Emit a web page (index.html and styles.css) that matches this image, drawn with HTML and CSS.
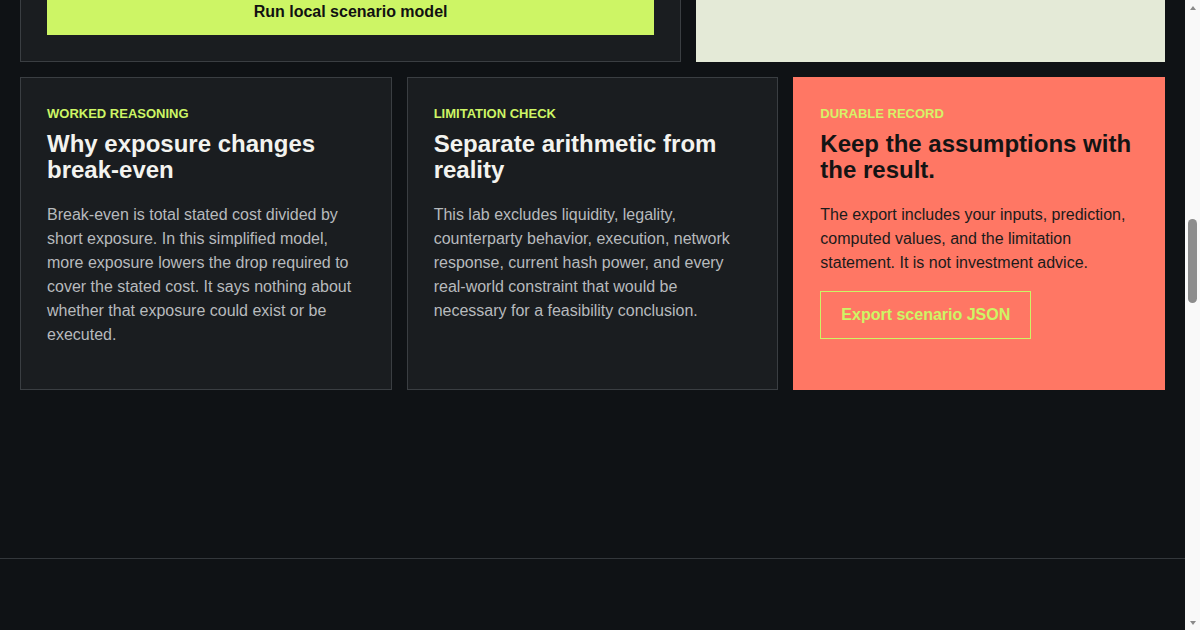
FILE: index.html
```html
<!DOCTYPE html>
<html lang="en">
<head>
    <meta charset="UTF-8">
    <meta name="viewport" content="width=device-width, initial-scale=1.0">
    <title>Short Exposure Scenario Lab</title>
    <link rel="stylesheet" href="styles.css">
</head>
<body>
    <header class="site-header">
        <div class="brand"><span class="brand-mark"></span>Scenario Lab</div>
        <nav class="site-nav">
            <a href="#model">Model</a>
            <a href="#notes">Notes</a>
            <a href="#record">Record</a>
        </nav>
    </header>

    <main class="page">
        <section class="hero">
            <p class="eyebrow">Educational arithmetic only</p>
            <h1>What would a price drop have to be to cover the stated cost?</h1>
            <p class="lede">Enter a short exposure and a total stated cost. The lab divides one by the other and shows the drop that would be needed to break even. Nothing is sent anywhere: every calculation runs in this page.</p>
        </section>

        <section class="steps">
            <div class="step">
                <span class="step-num">01</span>
                <h3>State the cost</h3>
                <p>Write down every cost you are assuming, in one currency.</p>
            </div>
            <div class="step">
                <span class="step-num">02</span>
                <h3>Choose exposure</h3>
                <p>Set a hypothetical short position size in BTC.</p>
            </div>
            <div class="step">
                <span class="step-num">03</span>
                <h3>Read the limits</h3>
                <p>Compare the arithmetic with what the model leaves out.</p>
            </div>
        </section>

        <div class="section-head">
            <p class="eyebrow">Local model</p>
            <h2>Run the scenario</h2>
            <p>Inputs on the left, computed values on the right. Results refresh only when you run the model.</p>
        </div>

        <section class="lab" id="model">
            <form class="card model-form" id="model-form">
                <p class="eyebrow">Scenario inputs</p>
                <h2>Describe the scenario</h2>
                <p class="form-intro">All values stay on this device. Change any field and run the model again to update the result.</p>

                <div class="field-grid">
                    <label class="field">
                        <span>Reference price (USD)</span>
                        <input type="number" value="64000">
                    </label>
                    <label class="field">
                        <span>Short exposure (BTC)</span>
                        <input type="number" value="250">
                    </label>
                    <label class="field">
                        <span>Total stated cost (USD)</span>
                        <input type="number" value="2000000">
                    </label>
                    <label class="field">
                        <span>Your prediction</span>
                        <select>
                            <option>Price falls more than break-even</option>
                            <option>Price falls less than break-even</option>
                        </select>
                    </label>
                    <label class="field">
                        <span>Scenario label</span>
                        <input type="text" value="Classroom example A">
                    </label>
                    <label class="field">
                        <span>Currency</span>
                        <select>
                            <option>USD</option>
                        </select>
                    </label>
                </div>

                <button type="submit" class="btn-run">Run local scenario model</button>
            </form>

            <aside class="result-panel">
                <p class="result-label">Computed result</p>
                <p class="result-value" id="result-value">12.5%</p>
                <p class="result-note">Drop required to cover the stated cost</p>
                <dl class="result-list">
                    <div><dt>Break-even price move</dt><dd>$8,000</dd></div>
                    <div><dt>Break-even price</dt><dd>$56,000</dd></div>
                    <div><dt>Exposure value</dt><dd>$16,000,000</dd></div>
                </dl>
            </aside>
        </section>

        <section class="notes" id="notes">
            <article class="note-card">
                <p class="eyebrow">Worked reasoning</p>
                <h2>Why exposure changes break-even</h2>
                <p>Break-even is total stated cost divided by short exposure. In this simplified model, more exposure lowers the drop required to cover the stated cost. It says nothing about whether that exposure could exist or be executed.</p>
            </article>
            <article class="note-card">
                <p class="eyebrow">Limitation check</p>
                <h2>Separate arithmetic from reality</h2>
                <p>This lab excludes liquidity, legality, counterparty behavior, execution, network response, current hash power, and every real-world constraint that would be necessary for a feasibility conclusion.</p>
            </article>
            <article class="note-card note-card--record" id="record">
                <p class="eyebrow">Durable record</p>
                <h2>Keep the assumptions with the result.</h2>
                <p>The export includes your inputs, prediction, computed values, and the limitation statement. It is not investment advice.</p>
                <button type="button" class="btn-outline" id="export-btn">Export scenario JSON</button>
            </article>
        </section>
    </main>

    <footer class="site-footer">
        <p>Scenario Lab runs entirely in your browser. No data leaves this page.</p>
    </footer>

    <!-- page scroll rail -->
    <div class="scroll-rail" aria-hidden="true">
        <span class="rail-btn"><i class="arrow-up"></i></span>
        <div class="rail-track"><div class="rail-thumb" id="rail-thumb"></div></div>
        <span class="rail-btn"><i class="arrow-down"></i></span>
    </div>

    <script src="app.js"></script>
</body>
</html>
```

FILE: styles.css
```css
* { margin: 0; padding: 0; box-sizing: border-box; }

:root {
    --bg: #0f1215;
    --card: #1a1d20;
    --line: #3a3e42;
    --lime: #cdf565;
    --coral: #ff7764;
    --paper: #e4ead7;
    --text: #f3f3ef;
    --muted: #b7babd;
}

body {
    font-family: "Liberation Sans", Arial, sans-serif;
    background: var(--bg);
    color: var(--text);
    padding-right: 15px;
}

/* scroll rail */
.scroll-rail {
    position: fixed;
    top: 0;
    right: 0;
    width: 15px;
    height: 100vh;
    background: #f9f9f9;
    display: flex;
    flex-direction: column;
    z-index: 10;
}

.rail-btn {
    height: 15px;
    display: flex;
    align-items: center;
    justify-content: center;
}

.arrow-up,
.arrow-down {
    width: 0;
    height: 0;
    border-left: 3.5px solid transparent;
    border-right: 3.5px solid transparent;
}

.arrow-up { border-bottom: 4px solid #8a8a8a; }
.arrow-down { border-top: 4px solid #8a8a8a; }

.rail-track {
    flex: 1;
    position: relative;
}

.rail-thumb {
    position: absolute;
    left: 3px;
    width: 9px;
    border-radius: 5px;
    background: #8d8d8d;
}

.site-header {
    display: flex;
    align-items: center;
    justify-content: space-between;
    height: 64px;
    padding: 0 20px;
    border-bottom: 1px solid #2e3236;
}

.brand {
    display: flex;
    align-items: center;
    gap: 10px;
    font-weight: 700;
    font-size: 16px;
}

.brand-mark {
    width: 14px;
    height: 14px;
    background: var(--lime);
}

.site-nav {
    display: flex;
    gap: 24px;
}

.site-nav a {
    color: var(--muted);
    text-decoration: none;
    font-size: 14px;
}

.page {
    padding: 0 20px 168px;
}

.eyebrow {
    font-size: 13px;
    line-height: 15px;
    font-weight: 700;
    text-transform: uppercase;
    color: var(--lime);
    margin-bottom: 10px;
}

/* hero */
.hero {
    padding: 200px 0 160px;
    max-width: 820px;
}

.hero h1 {
    font-size: 52px;
    line-height: 56px;
    margin: 6px 0 28px;
}

.lede {
    font-size: 19px;
    line-height: 30px;
    color: var(--muted);
    max-width: 680px;
}

.steps {
    display: grid;
    grid-template-columns: repeat(3, minmax(0, 1fr));
    gap: 15px;
    margin-bottom: 120px;
}

.step {
    border-top: 1px solid var(--line);
    padding-top: 20px;
}

.step-num {
    display: block;
    color: var(--lime);
    font-weight: 700;
    font-size: 13px;
    line-height: 15px;
    margin-bottom: 12px;
}

.step h3 {
    font-size: 20px;
    line-height: 24px;
    margin-bottom: 8px;
}

.step p {
    color: var(--muted);
    font-size: 16px;
    line-height: 24px;
}

.section-head {
    margin-bottom: 34px;
    max-width: 640px;
}

.section-head h2 {
    font-size: 32px;
    line-height: 36px;
    margin-bottom: 12px;
}

.section-head p:not(.eyebrow) {
    color: var(--muted);
    font-size: 16px;
    line-height: 24px;
}

/* model form + result */
.lab {
    display: grid;
    grid-template-columns: minmax(0, 1.41fr) minmax(0, 1fr);
    gap: 15px;
}

.card {
    background: var(--card);
    border: 1px solid var(--line);
    padding: 26px;
}

.model-form h2 {
    font-size: 24px;
    line-height: 26px;
    margin-bottom: 12px;
}

.form-intro {
    color: var(--muted);
    font-size: 16px;
    line-height: 24px;
    margin-bottom: 24px;
}

.field-grid {
    display: grid;
    grid-template-columns: 1fr 1fr;
    gap: 18px 16px;
    margin-bottom: 26px;
}

.field {
    display: flex;
    flex-direction: column;
    gap: 8px;
    font-size: 14px;
    line-height: 16px;
    color: var(--muted);
}

.field input,
.field select {
    background: var(--bg);
    border: 1px solid var(--line);
    color: var(--text);
    font: inherit;
    font-size: 16px;
    padding: 12px;
    height: 46px;
}

.btn-run {
    display: block;
    width: 100%;
    background: var(--lime);
    color: #111;
    border: none;
    font-family: inherit;
    font-size: 16px;
    line-height: 20px;
    font-weight: 700;
    padding: 14px 20px 13px;
    cursor: pointer;
}

.result-panel {
    background: var(--paper);
    color: #15181a;
    padding: 26px;
}

.result-label {
    font-size: 13px;
    font-weight: 700;
    text-transform: uppercase;
    margin-bottom: 12px;
}

.result-value {
    font-size: 64px;
    font-weight: 700;
    line-height: 1;
}

.result-note {
    margin: 10px 0 28px;
    font-size: 16px;
}

.result-list div {
    display: flex;
    justify-content: space-between;
    border-top: 1px solid #c3c9b6;
    padding: 12px 0;
    font-size: 15px;
}

.result-list dd {
    font-weight: 700;
}

/* explanation cards */
.notes {
    display: grid;
    grid-template-columns: repeat(3, minmax(0, 1fr));
    gap: 15px;
    margin-top: 15px;
    scroll-margin-top: 77px;
}

.note-card {
    background: var(--card);
    border: 1px solid var(--line);
    padding: 28px 26px 26px;
}

.note-card h2 {
    font-size: 24px;
    line-height: 26px;
    margin-bottom: 20px;
}

.note-card p:not(.eyebrow) {
    font-size: 16px;
    line-height: 24px;
    color: var(--muted);
    margin-bottom: 16px;
}

.note-card--record {
    background: var(--coral);
    border-color: var(--coral);
    color: #141414;
}

.note-card--record p:not(.eyebrow) {
    color: #1b1b1b;
}

.note-card--record .eyebrow {
    color: #d6f268;
}

.btn-outline {
    background: transparent;
    border: 1px solid var(--lime);
    color: var(--lime);
    font-family: inherit;
    font-size: 16px;
    line-height: 18px;
    font-weight: 700;
    padding: 14px 20px;
    cursor: pointer;
}

.site-footer {
    border-top: 1px solid #33373b;
    padding: 96px 20px 120px;
    min-height: 2402px;
    color: #6d7276;
    font-size: 13px;
}
```

FILE: app.js
```js
const thumb = document.getElementById('rail-thumb');
const track = thumb.parentElement;

// keep the rail thumb in step with the page scroll
function syncRail() {
    const docH = document.documentElement.scrollHeight;
    const h = track.clientHeight;
    thumb.style.height = Math.max(24, h * window.innerHeight / docH) + 'px';
    thumb.style.top = (h * window.scrollY / docH) + 'px';
}

window.addEventListener('scroll', syncRail);
window.addEventListener('resize', syncRail);

// open on the explanation cards under the model
document.getElementById('notes').scrollIntoView();
syncRail();

document.getElementById('model-form').addEventListener('submit', (e) => {
    e.preventDefault();
});

document.getElementById('export-btn').addEventListener('click', () => {
    const record = {
        inputs: { referencePrice: 64000, exposureBtc: 250, statedCostUsd: 2000000 },
        result: document.getElementById('result-value').textContent,
        limitation: 'Arithmetic only. Not investment advice.'
    };
    const blob = new Blob([JSON.stringify(record, null, 2)], { type: 'application/json' });
    const a = document.createElement('a');
    a.href = URL.createObjectURL(blob);
    a.download = 'scenario.json';
    a.click();
});
```
